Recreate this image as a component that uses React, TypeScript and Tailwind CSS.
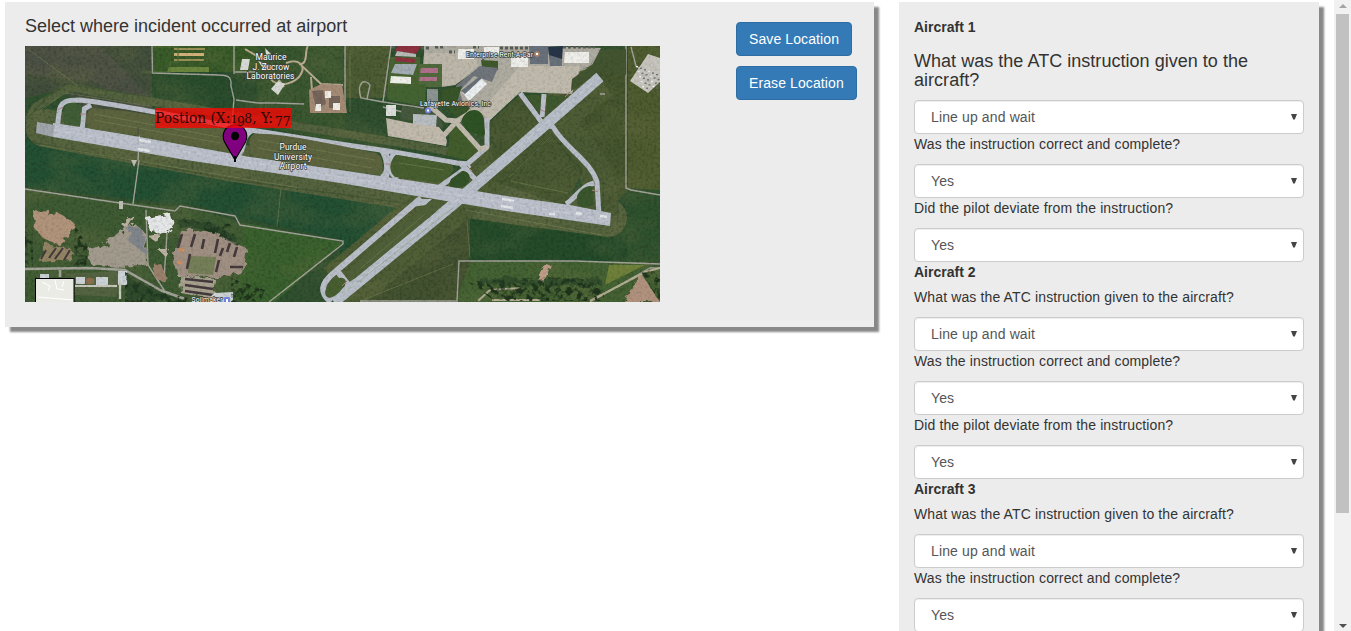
import React from "react";

const font = "font-['Liberation_Sans',Arial,sans-serif]";

function Choice({ value, options }: { value: string; options: string[] }) {
  return (
    <div className="relative h-[34px] w-full">
      <select
        defaultValue={value}
        className="block h-[34px] w-full appearance-none rounded border border-[#ccc] bg-white px-4 text-sm tracking-[0.13px] text-[#555] shadow-[inset_0_1px_1px_rgba(0,0,0,0.075)]"
      >
        {options.map((o) => (
          <option key={o}>{o}</option>
        ))}
      </select>
      <svg className="pointer-events-none absolute top-[14px] right-[7px]" width="6" height="6" viewBox="0 0 6 6">
        <path d="M0 0H6L3.800 5.500H2.200Z" fill="#444" />
      </svg>
    </div>
  );
}

function Question({ text, value, options }: { text: string; value: string; options: string[] }) {
  return (
    <label className="block">
      <span className="mb-2.5 block h-5 leading-5 tracking-[0.13px]">{text}</span>
      <Choice value={value} options={options} />
    </label>
  );
}

const instructions = ["Line up and wait", "Hold short", "Cleared for takeoff"];
const yesNo = ["Yes", "No"];

function Aircraft({ index }: { index: number }) {
  return (
    <section>
      <div className="h-5 font-bold leading-5">Aircraft {index}</div>
      {index === 1 ? (
        <div className="mt-[14px]">
          <h4 className="mb-[9px] h-10 text-lg leading-[19px] tracking-[0.03px] pt-px">What was the ATC instruction given to the aircraft?</h4>
          <Choice value="Line up and wait" options={instructions} />
        </div>
      ) : (
        <div className="mt-[5px]">
          <Question text="What was the ATC instruction given to the aircraft?" value="Line up and wait" options={instructions} />
        </div>
      )}
      <Question text="Was the instruction correct and complete?" value="Yes" options={yesNo} />
      <Question text="Did the pilot deviate from the instruction?" value="Yes" options={yesNo} />
    </section>
  );
}

const parkedCars = Array.from({ length: 26 }, (_, i) => ({
  x: 636 + (i % 6) * 4 + Math.floor(i / 6) * 1.5,
  y: 66 + Math.floor(i / 6) * 5 + (i % 6) * 1.6,
}));

function AirportMap() {
  return (
    <svg className="block" width="635" height="256" viewBox="25 46 635 256">
      <defs>
        <filter id="grain" x="0" y="0" width="100%" height="100%" colorInterpolationFilters="sRGB">
          <feTurbulence type="fractalNoise" baseFrequency="0.35" numOctaves="3" seed="4" />
          <feColorMatrix values="0 0 0 0 0.05  0 0 0 0 0.08  0 0 0 0 0.03  1.6 0 0 0 -0.7" />
        </filter>
        <filter id="patch" x="0" y="0" width="100%" height="100%" colorInterpolationFilters="sRGB">
          <feTurbulence type="fractalNoise" baseFrequency="0.02 0.035" numOctaves="4" seed="9" />
          <feColorMatrix values="0 0 0 0 0.44  0 0 0 0 0.46  0 0 0 0 0.28  2.2 0 0 0 -0.95" />
        </filter>
        <filter id="rough" x="-10%" y="-10%" width="120%" height="120%">
          <feTurbulence type="fractalNoise" baseFrequency="0.16" numOctaves="2" seed="2" />
          <feDisplacementMap in="SourceGraphic" scale="9" />
        </filter>
        <filter id="trees" x="0" y="0" width="100%" height="100%" colorInterpolationFilters="sRGB">
          <feTurbulence type="fractalNoise" baseFrequency="0.18" numOctaves="3" seed="7" result="n" />
          <feColorMatrix in="n" values="0 0 0 0 0.12  0 0 0 0 0.2  0 0 0 0 0.11  5 0 0 0 -2.3" result="d" />
          <feComposite in="d" in2="SourceGraphic" operator="in" />
        </filter>
      </defs>

      {/* Fields */}
      <rect x="25" y="46" width="635" height="256" fill="#305030" />
      <path d="M25 46H152V119H97L60 90 25 98Z" fill="#424e3c" />
      <path d="M25 46H100L152 100V118L95 82 25 74Z" fill="#4f5347" opacity=".8" />
      <path d="M152 72H235V118L152 116Z" fill="#294d2d" />
      <path d="M152 46H260V72H152Z" fill="#3a5c2a" />
      <path d="M263 46H345V145L258 125V46Z" fill="#385630" />
      <path d="M345 46H390L386 98H345Z" fill="#4c5c34" />
      <path d="M25 138L232 175 420 199 330 290 343 240 237 217 204 207 25 187Z" fill="#245033" />
      <path d="M25 190L200 210 240 222 343 242 270 302H25Z" fill="#3f5b34" />
      <path d="M245 223L343 243 275 302 235 300Z" fill="#3a612e" />
      <path d="M468 212L600 232 627 215V262L457 262Z" fill="#244b2a" />
      <path d="M628 46H660V190L628 188Z" fill="#4e5c30" />
      <path d="M628 190H660V261H628Z" fill="#2f522e" />
      <path d="M600 50H627V190L600 220 560 125Z" fill="#45552e" />
      <path d="M460 261L645 262 660 270V302H455Z" fill="#446233" />
      <path d="M340 302L458 210 470 216V261L457 300Z" fill="#435231" />

      {/* Mown strips around the runways */}
      <path d="M45 128L235 163 430 194 608 218" fill="none" stroke="#55633f" strokeWidth="38" strokeLinecap="round" />
      <path d="M30 122C31 103 44 104 53 97C62 88 75 86 90 91L260 120 400 143 470 155" fill="none" stroke="#53623f" strokeWidth="8" />
      <path d="M599 78L450 207 334 302" fill="none" stroke="#4e5d36" strokeWidth="42" />
      <path d="M421 200L330 276" fill="none" stroke="#4e5d36" strokeWidth="20" />
      <path d="M567 135C590 155 603 178 603 216" fill="none" stroke="#4b5b35" strokeWidth="32" />
      <path d="M490 180L548 124 583 170 565 206Z" fill="#485832" />
      <path d="M494 165L490 122 520 95 548 116Z" fill="#455630" />
      <path d="M30 142L235 180 410 204M26 120L48 96 68 84 150 97M500 185L552 135 582 172M560 117L625 62M603 178V226" fill="none" stroke="#364d2b" strokeWidth="1.500" opacity=".5" />

      <rect x="25" y="46" width="635" height="256" filter="url(#patch)" opacity=".34" />
      <rect x="25" y="46" width="635" height="256" filter="url(#grain)" opacity=".2" />

      {/* Crop plots */}
      <path d="M169 67H209V72H167Z" fill="#6a853d" />
      <path d="M174 49H205M174 60H204" stroke="#9a9057" strokeWidth="2" />
      <path d="M174 54.500H204" stroke="#d0b078" strokeWidth="3" />
      <path d="M151 47H178V62H170V72H143" fill="none" stroke="#526f35" />

      {/* Roads */}
      <g fill="none" stroke="#a3a299" strokeWidth="1.400">
        <path d="M152 46L152.500 73 219 75C232 75 231 80 231 86L234 99 232 125M234 46V74M236 100L258 103 275 103 304 104M235 72H255" />
        <path d="M345 46V113M391 46L383 102 424 108M383 102L361 98C356 82 365 78 370 85L367 99M383 107L430 119" />
        <path d="M25 189L120 203 175 211 180 206 235 216 240 225 343 241V244L269 302M139 160L133 204M140 125L138 160" />
        <path d="M25 269L90 268 125 270 160 290 185 299M120 269V299M97 286H117M60 270V277" strokeWidth="2.500" />
        <path d="M360 301H457L459 261 575 261 660 264M626 46V188L631 190 660 195M590 302L650 268 660 268" />
        <path d="M600 94H605M631 47L636 66 660 81M599 51L590 68 573 72M146 210L148 265 164 290M167 233L164 280" />
      </g>
      <path d="M28 49L78 86M350 50V112M363 300L453 264M467 220L470 258M281 189L277 227" fill="none" stroke="#7e8757" opacity=".5" />

      {/* Hangars and apron, north side */}
      <path d="M424 46H536L601 48 590 66 580 70 572 94 541 93 520 92 490 120 487 130 476 135 459 121 457 119 470 108 455 97 474 72 455 85 432 84 424 65Z" fill="#aeaba1" />
      <path d="M480 112L520 66H580L572 93 520 92 490 120Z" fill="#c0baad" />
      <path d="M424 53H475L478 66 455 85 442 87 423 66Z" fill="#bdb7aa" />
      <path d="M481 60L498 61V70L483 74Z" fill="#3f592d" />
      <path d="M456 86L480 66 498 68 492 82 474 76 459 91 464 105 455 99Z" fill="#70757c" />
      <path d="M462 92L480 77 487 84 469 101Z" fill="#edf0f1" />
      <path d="M461 91L480 76 482 78 465 94Z" fill="#667078" />
      <path d="M390 57H420V101L387 98Z" fill="#496332" />
      <path d="M398 46H421L416 54 395 51ZM396 57L416 59 414 63 395 61Z" fill="#8d3040" />
      <path d="M397 51L416 54V57L395 56Z" fill="#b9bbb9" />
      <path d="M395 64H417L413 75 391 73Z" fill="#a3abb3" />
      <path d="M391 76L411 77V84L390 83Z" fill="#f0f0ea" />
      <path d="M419 64H442V87H419Z" fill="#506a3e" />
      <path d="M421 68H438V73H420ZM420 77H437V81H419Z" fill="#b0708a" />
      <path d="M390 87L415 85 426 84 425 106 388 100Z" fill="#446332" />
      <path d="M427 89H438V108H427Z" fill="#8c9493" />
      <path d="M442 90L462 86 457 102 470 108 459 121 442 103Z" fill="#385429" />
      <path d="M402 106L415 107V121L400 119ZM417 109H436L444 128 413 124Z" fill="#46593f" />
      <path d="M386 105H396V116H386Z" fill="#dcdedb" />
      <path d="M413 114L437 115 436 127 413 125Z" fill="#b7bdc0" />
      <path d="M386 118L410 123 439 127 444 133 447 141 446 146 388 136Z" fill="#c0b9ac" />
      <path d="M449 128L457 122 482 149 466 160 446 155 449 146Z" fill="#425c2c" />
      <path d="M511 57H528V67H511ZM565 52H589V63H564ZM458 49H474V59H458ZM484 47H499V55H484Z" fill="#eeeeeb" />
      <path d="M529 46H548V64H530ZM548 47H562V66H550Z" fill="#68717b" />
      <path d="M548 47L563 46 562 59 549 55Z" fill="#273548" />
      <path d="M392 47H395M421 48H430M435 47H445M449 52H455M473 47H479M500 48H528M563 47H595" stroke="#565d56" strokeWidth="3" strokeDasharray="3 2" />
      <path d="M571 91L572 79 593 64 600 50 626 49V75L602 71Z" fill="#425430" />
      <path d="M648 54L660 58V82L648 93 630 81Z" fill="#c6c4bd" />
      {parkedCars.map((c, i) => (
        <rect key={i} x={c.x} y={c.y} width="2" height="1.300" fill={i % 3 ? "#6c7071" : "#eee"} />
      ))}

      {/* Laboratories */}
      <g fill="none" stroke="#b9ab91" strokeWidth="2">
        <path d="M286 63C298 58 308 65 299 77C289 87 270 87 270 74M299 64C309 65 304 51 308 46M301 65L321 84 343 85M311 77L313 103M276 76L284 87M245 49L262 59" />
      </g>
      <path d="M242 59H250L248 70H240ZM265 48L271 54 267 60ZM258 61L270 65 265 71ZM278 81L285 84 278 95 271 89Z" fill="#d7d9d5" />
      <path d="M309 90L321 84 342 85 347 113 310 113Z" fill="#a58b76" />
      <path d="M312 91L323 90 326 104 316 108ZM329 96H340V108H329Z" fill="#75655a" />
      <path d="M325 91H331V98H325ZM333 103H340V110H333ZM316 104H321V111H315Z" fill="#f0ede6" />

      {/* Taxiways */}
      <g fill="none" stroke="#b9bec8" strokeLinejoin="round">
        <path d="M57 130L59 113C60 101 67 100 80 100C118 104 190 119 250 130L340 144 388 151 457 163 470 164" strokeWidth="5" />
        <path d="M82 131L84 109 91 105" strokeWidth="5" />
        <path d="M237 156C247 150 240 137 252 131M387 180V149M381 177C390 174 386 157 381 150M398 179C386 173 388 155 397 152" strokeWidth="4.500" />
        <path d="M470 165L438 188M461 164L478 182M487 118V147L466 165" strokeWidth="5" />
        <path d="M421 198L335 272C321 283 319 292 331 302" strokeWidth="6" />
        <path d="M544 94L542 117M520 93L543 124 553 127C566 149 590 160 597 182L599 216M594 183C580 187 576 198 566 204" strokeWidth="5" />
        <path d="M338 272L350 287" strokeWidth="6" />
      </g>
      <path d="M430 106L446 120 457 121 480 107M437 143L456 122 480 149 487 147" fill="none" stroke="#c0baad" strokeWidth="5" />
      <path d="M461 122C464 108 481 105 484 119L485 134C481 138 469 134 461 122Z" fill="#2f5225" />
      <path d="M600 77L545 125 450 207 334 302" fill="none" stroke="#b8bec8" strokeWidth="11" />
      <path d="M53 123L87 128 140 137 250 157 340 170 440 185 500 195 570 205 611 213 610 226 500 210 440 200 340 183 180 159 53 137Z" fill="#bbc0cb" />
      <path d="M37 122L55 125 53 137 36 133Z" fill="#a1a6ac" />
      <path d="M416 199L432 199 426 205 412 207Z" fill="#b8bec8" />

      {/* Infield islands */}
      <g fill="#5c633e">
        <path d="M67 104C75 101 81 104 82 108L80 126 65 124C61 118 62 109 67 104Z" fill="#3f5d36" />
        <path d="M93 108C140 111 190 122 231 130C241 133 238 147 229 151L142 136 91 129C84 124 86 109 93 108Z" />
        <path d="M254 134C280 132 340 146 376 153C384 157 385 169 378 173C350 171 310 163 256 156C247 151 248 137 254 134Z" />
        <path d="M398 155L449 164C460 168 449 177 438 183L395 177C387 170 390 158 398 155Z" fill="#475e30" />
        <path d="M451 179L462 171C470 171 473 179 465 186 460 189 447 187 449 184Z" fill="#335228" />
        <path d="M577 196C581 187 590 184 593 187V203C590 209 579 209 577 203Z" fill="#3a562d" />
        <path d="M526 95H541L540 115Z" fill="#3e582f" />
        <path d="M547 96H568L547 114Z" fill="#3e582f" />
        <path d="M430 201L443 202C443 207 430 217 420 225L358 276C348 285 343 278 350 269Z" fill="#4f6039" />
        <path d="M328 286C334 277 345 275 346 282 344 289 332 301 327 297 324 294 325 289 328 286Z" fill="#475e30" />
      </g>
      <g fill="none" stroke="#86905f" strokeWidth="1" opacity=".4">
        <path d="M94 114L219 137M94 120L220 143M258 140L375 160M258 148L372 168M399 163L444 170M360 269L425 214M508 178L550 137M510 181L568 193M38 112L53 101 66 93 150 106M40 145L300 188M466 210L602 235M345 292L454 207" />
      </g>
      <path d="M53 130L180 151 340 177 490 200 608 220M334 301L451 205 596 80" fill="none" stroke="#d2d6dc" strokeWidth=".7" strokeDasharray="7 4" opacity=".8" />
      <path d="M139 140L151 142M138 149L150 151M502 199L514 201M501 206L513 208M549 214H555M576 213L582 214M600 216L607 217" stroke="#e4e7e9" strokeWidth="2.500" />
      <path d="M138 127V136" stroke="#4b5544" strokeWidth="1.500" />
      <path d="M58 110L63 107M80 114H87M386 164H391M467 166L472 171M540 109L545 112M592 190L598 192M347 281L342 286M570 92L565 97" stroke="#a97e7c" strokeWidth="1" />

      {/* Quarry and yards, south side */}
      <g filter="url(#rough)">
        <path d="M33 210L58 213 75 224 70 236 60 245 42 237 34 227Z" fill="#b0937a" />
        <path d="M45 243L71 249 72 260 40 262Z" fill="#918363" />
        <path d="M119 232L134 223 146 234 147 265 125 268 91 264 87 250 106 244Z" fill="#a19a8d" />
        <path d="M129 226L143 230 146 254 130 242Z" fill="#80858b" />
        <path d="M146 218L171 213 174 224 165 235 150 231Z" fill="#e4e6e7" />
        <path d="M121 224L135 216 127 229ZM148 236L160 234 157 243ZM157 249H169L165 256Z" fill="#bdb3a2" />
        <path d="M183 230L216 233 247 249 243 274 216 277 180 276 172 261Z" fill="#a08f83" />
        <path d="M151 265L162 264 168 285 155 277Z" fill="#9a806b" />
        <path d="M180 276L215 279 213 299 181 293Z" fill="#a9a18f" />
        <path d="M625 302L641 274 660 302Z" fill="#b0927e" />
        <path d="M548 264L541 282" stroke="#bd9b87" strokeWidth="6" />
      </g>
      <path d="M189 256L216 257 213 275 188 273Z" fill="#747e57" />
      <g stroke="#443a3c" strokeWidth="2.600" fill="none">
        <path d="M182 234L178 248M195 234L191 247M190 254L187 269M204 239L202 249M218 239L215 253M223 248L220 256M230 243L227 252M237 247L234 257M219 260L216 272M230 267L243 267M185 279L213 282M185 285L213 289M185 291L213 295" />
        <path d="M46 250L41 259M56 248L49 258M63 248L55 259M70 250L64 260" strokeWidth="2" />
      </g>
      <path d="M179 249L184 251M178 262L182 263" stroke="#d3905c" strokeWidth="3" />
      <path d="M131 160H137L134 167ZM119 201H123V209H119Z" fill="#bcbcb2" />
      <path d="M64 274L121 271 116 297 75 295 74 278Z" fill="#5c6848" opacity=".7" />
      <path d="M76 277H85V284H76ZM96 277H108V285H96ZM40 274H49V278H40ZM118 271H127V285H118ZM214 293L233 292V302H206Z" fill="#ccd2d6" />
      <path d="M86 278H94V284H86Z" fill="#8a6f4c" />
      <path d="M120 299V280M75 286H117" stroke="#c9c8bd" strokeWidth="2" />
      <path d="M478 301L490 290 520 288M492 300H540M590 301L645 272 660 268" fill="none" stroke="#b4ad94" strokeWidth="2" />
      <path d="M609 265H645L605 285Z" fill="#8b9440" opacity=".6" />
      <g fill="#456633" filter="url(#trees)">
        <path d="M125 272L160 291 205 302H125ZM231 278L265 290 260 302H231ZM176 219L230 224 238 246 205 230ZM75 225L88 247 86 266 73 266ZM468 282L545 277 600 280 605 301H495ZM25 230H33V267H25ZM640 270L660 272V302Z" />
      </g>
      <path d="M175 218L210 222 236 237 238 246 211 230 178 227ZM127 277L158 291 179 300H126ZM480 279L515 276 520 281 600 278 602 285 480 285Z" fill="#243c26" opacity=".5" filter="url(#rough)" />
      <rect x="25" y="46" width="635" height="256" filter="url(#grain)" opacity=".18" />

      {/* Inset */}
      <rect x="35.500" y="278.500" width="38.500" height="28" fill="#ebebe6" stroke="#000" />
      <path d="M42 282L50 286 48 291M55 280L57 289 64 290M64 281L62 287M38 297L73 300" fill="none" stroke="#fff" />

      {/* Place names */}
      <g
        className="font-[Roboto,sans-serif]"
        fontSize="8.500"
        textAnchor="middle"
        fill="#fff"
        stroke="#3a403a"
        strokeWidth="1.400"
        paintOrder="stroke"
      >
        <text x="271" y="60" textLength="31">Maurice</text>
        <text x="271" y="69.500" textLength="37">J. Zucrow</text>
        <text x="270.500" y="79" textLength="48">Laboratories</text>
        <text x="293" y="150" textLength="27">Purdue</text>
        <text x="293" y="159.500" textLength="38">University</text>
        <text x="293" y="169" textLength="27">Airport</text>
        <g fontSize="7">
          <text x="499.500" y="57" textLength="67">Enterprise Rent-A-Car</text>
          <text x="455.500" y="105.500" textLength="71">Lafayette Avionics, Inc</text>
          <text x="207" y="302" textLength="31">Soilmaker</text>
        </g>
      </g>
      <circle cx="537" cy="54" r="2.700" fill="#b48467" />
      <path d="M536 53H538V55H536Z" fill="#fff" />
      <circle cx="428" cy="110.500" r="3" fill="#7382dc" />
      <path d="M427 109.500H429V111.500H427Z" fill="#fff" />
      <rect x="224" y="297" width="6" height="6" rx="1" fill="#6f83e1" />
      <path d="M226 299H228V302H226Z" fill="#fff" />

      {/* Selected position */}
      <path d="M235 160L224.500 142C221 134 225 125 235 125S249 134 245.500 142Z" fill="#800080" stroke="#000" strokeWidth="1.100" />
      <path d="M235 156V162" stroke="#000" strokeWidth="2" />
      <circle cx="235" cy="136" r="4.200" />
      <rect x="155" y="108" width="136" height="20" fill="#f00" fillOpacity=".75" />
      <text transform="translate(155 123) scale(.95 1)" className="font-['DejaVu_Serif',serif]" fontSize="14.500" fill="#2a0808">
        Postion (X:<tspan x="80" fontSize="10.500">1</tspan><tspan x="86.200" y="2.500" fontSize="13">9</tspan><tspan x="94" y="0" fontSize="13">8</tspan><tspan x="102.300" y="0">, Y:</tspan><tspan x="126.300" y="2.500" fontSize="13">77</tspan>
      </text>
    </svg>
  );
}

function ScrollTrack() {
  return (
    <div className="flex h-full w-[17px] shrink-0 flex-col items-center bg-[#f1f1f1]">
      <div className="flex h-[14px] items-start pt-1">
        <svg width="8" height="4" viewBox="0 0 8 4"><path d="M0 4L4 0L8 4Z" fill="#a3a3a3" /></svg>
      </div>
      <div className="h-[499px] w-[13px] bg-[#c1c1c1]" />
      <svg className="mt-auto mb-[3px]" width="8" height="4" viewBox="0 0 8 4"><path d="M0 0L4 4L8 0Z" fill="#505050" /></svg>
    </div>
  );
}

const buttonStyle =
  "h-[34px] rounded border border-[#2e6da4] bg-[#337ab7] px-3 text-sm leading-5 tracking-[0.1px] text-white whitespace-nowrap";

export default function App() {
  return (
    <div className={`flex h-[631px] w-[1351px] items-start overflow-hidden bg-white text-sm text-[#333] ${font}`}>
      <main className="mt-[2px] ml-[5px] flex h-[325px] w-[869px] shrink-0 bg-[#ececec] pl-5 shadow-[5px_5px_2px_#888]">
        <div className="w-[635px] shrink-0">
          <h4 className="flex h-11 items-start pt-[14px] text-lg leading-5">Select where incident occurred at airport</h4>
          <AirportMap />
        </div>
        <div className="ml-[76px] flex flex-col items-start gap-2.5 pt-5">
          <button className={buttonStyle}>Save Location</button>
          <button className={buttonStyle}>Erase Location</button>
        </div>
      </main>
      <aside className="mt-[2px] ml-[25px] h-[720px] w-[420px] shrink-0 bg-[#ececec] px-[15px] pt-[15px] shadow-[5px_5px_2px_#888]">
        {[1, 2, 3].map((n) => (
          <Aircraft key={n} index={n} />
        ))}
      </aside>
      <div className="ml-auto h-full">
        <ScrollTrack />
      </div>
    </div>
  );
}
